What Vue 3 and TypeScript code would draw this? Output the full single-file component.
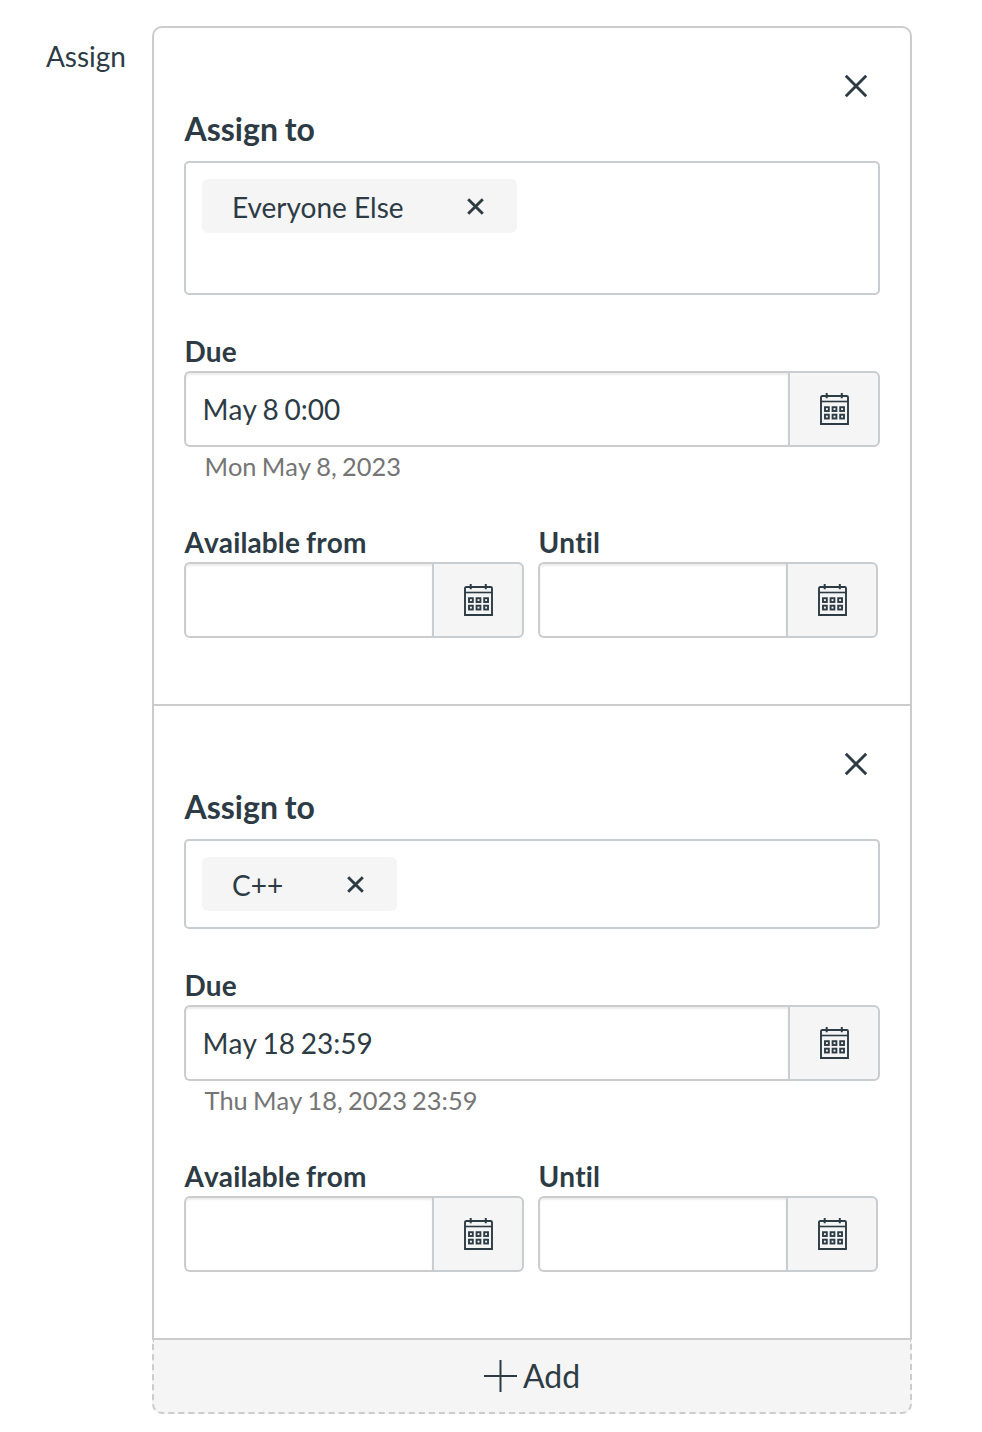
<script setup lang="ts">
import { h, type FunctionalComponent } from 'vue'

interface Override {
  id: number
  assignee: string
  due: string
  hint: string
  roomy: boolean
}

const overrides: Override[] = [
  { id: 1, assignee: 'Everyone Else', due: 'May 8 0:00', hint: 'Mon May 8, 2023', roomy: true },
  { id: 2, assignee: 'C++', due: 'May 18 23:59', hint: 'Thu May 18, 2023 23:59', roomy: false },
]

const cells = [0, 1].flatMap((row) => [0, 1, 2].map((col) => ({ x: 6 + col * 7.6, y: 14.2 + row * 7.5 })))

const CalendarIcon: FunctionalComponent = () =>
  h('svg', { width: 30, height: 32, viewBox: '0 0 30 32', fill: 'none', stroke: '#2d3b45' }, [
    h('path', { d: 'M2 31V4.3Q2 3 3.3 3H27.7Q29 3 29 4.3V31Z', 'stroke-width': 1.9 }),
    h('path', { d: 'M2 8.5H29', 'stroke-width': 1.6 }),
    h('path', { d: 'M7.7 0V5.2M22.8 0V5.2', 'stroke-width': 2 }),
    ...cells.map((c) => h('rect', { x: c.x, y: c.y, width: 3.8, height: 3.8, 'stroke-width': 1.9 })),
  ])
</script>

<template>
  <main class="page">
    <div class="side-label">Assign</div>
    <div class="group">
      <section v-for="item in overrides" :key="item.id" class="card">
        <div class="card-top">
          <button class="close" type="button" aria-label="Remove">
            <svg width="24" height="24" viewBox="0 0 24 24" fill="none" stroke="#2d3b45" stroke-width="2.9">
              <path d="M1.8 1.8L22.2 22.2M22.2 1.8L1.8 22.2" />
            </svg>
          </button>
        </div>
        <h2 class="title">Assign to</h2>
        <div class="assignees" :class="{ roomy: item.roomy }">
          <span class="pill">
            <span>{{ item.assignee }}</span>
            <svg width="17" height="17" viewBox="0 0 17 17" fill="none" stroke="#2d3b45" stroke-width="2.9">
              <path d="M1.2 1.2L15.8 15.8M15.8 1.2L1.2 15.8" />
            </svg>
          </span>
        </div>

        <div class="label due-label">Due</div>
        <div class="date-field">
          <div class="value">{{ item.due }}</div>
          <button class="picker" type="button" aria-label="Pick a date"><CalendarIcon /></button>
        </div>
        <div class="hint">{{ item.hint }}</div>

        <div class="range">
          <div v-for="name in ['Available from', 'Until']" :key="name" class="range-item">
            <div class="label">{{ name }}</div>
            <div class="date-field">
              <div class="value"></div>
              <button class="picker" type="button" aria-label="Pick a date"><CalendarIcon /></button>
            </div>
          </div>
        </div>
      </section>
      <button class="add" type="button">
        <svg width="33" height="32" viewBox="0 0 33 32" fill="none" stroke="#2d3b45" stroke-width="2">
          <path d="M0 16H33M16.5 0V32" />
        </svg>
        <span>Add</span>
      </button>
    </div>
  </main>
</template>

<style>
body {
  background: #fff;
}
</style>

<style scoped>
.page {
  display: flex;
  box-sizing: border-box;
  width: 982px;
  height: 1432px;
  padding-top: 26px;
  font-family: Lato, sans-serif;
  font-size: 28px;
  font-variant-ligatures: none;
  line-height: 40px;
  color: #2d3b45;
  overflow: hidden;
}

button {
  box-sizing: border-box;
  border: 0;
  padding: 0;
  margin: 0;
  font: inherit;
  color: inherit;
  background: none;
}

svg {
  display: block;
  flex: none;
}

.side-label {
  box-sizing: border-box;
  width: 152px;
  padding: 10px 26px 0 0;
  text-align: right;
}

.group {
  width: 760px;
}

.card {
  box-sizing: border-box;
  border: 2px solid #ccc;
  border-top-width: 0;
  padding: 46px 30px 66px;
}

.card:first-child {
  border-top-width: 2px;
  border-radius: 10px 10px 0 0;
}

.card-top {
  display: flex;
  justify-content: flex-end;
  height: 34px;
  padding-right: 12px;
}

.close {
  height: 24px;
}

.title {
  margin: 0;
  height: 53px;
  padding-left: 0.5px;
  font-size: 32px;
  font-weight: 700;
  line-height: 42px;
  word-spacing: -1px;
}

.assignees {
  display: flex;
  align-items: flex-start;
  box-sizing: border-box;
  height: 90px;
  padding: 16px;
  border: 2px solid #c7cdd1;
  border-radius: 5px;
}

.assignees.roomy {
  height: 134px;
}

.pill {
  display: flex;
  align-items: center;
  gap: 63.4px;
  box-sizing: border-box;
  height: 54px;
  padding: 1px 33px 0 30px;
  border-radius: 6px;
  background: #f5f5f5;
}

.label {
  height: 39px;
  padding-left: 0.4px;
  font-weight: 700;
  font-kerning: none;
  letter-spacing: 0.12px;
  word-spacing: -0.8px;
  line-height: 38px;
}

.due-label {
  margin-top: 37px;
}

.date-field {
  display: flex;
  height: 76px;
}

.value {
  flex: 1;
  box-sizing: border-box;
  padding: 0 16.5px;
  font-kerning: none;
  word-spacing: -1.5px;
  line-height: 72px;
  border: 2px solid #ccc;
  border-right: 0;
  border-radius: 6px 0 0 6px;
  box-shadow: inset 0 2px 2px rgba(0, 0, 0, 0.075);
}

.picker {
  display: flex;
  align-items: center;
  justify-content: center;
  width: 92px;
  border: 2px solid #c7cdd1;
  border-radius: 0 6px 6px 0;
  background: #f5f5f5;
}

.hint {
  height: 76px;
  padding-left: 20.4px;
  font-size: 25.4px;
  font-kerning: none;
  word-spacing: -1.25px;
  line-height: 38px;
  color: #757575;
}

.range {
  display: flex;
  gap: 14px;
}

.range-item {
  width: 340px;
}

.add {
  display: flex;
  align-items: center;
  justify-content: center;
  gap: 6px;
  width: 100%;
  height: 74px;
  border: 2px dashed #ccc;
  border-top: 0;
  border-radius: 0 0 10px 10px;
  font-size: 32px;
  background: #f5f5f5;
}
</style>
